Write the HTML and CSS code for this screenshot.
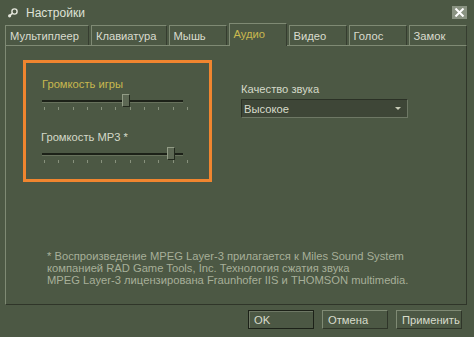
FILE: index.html
```html
<!DOCTYPE html>
<html lang="ru">
<head>
<meta charset="utf-8">
<title>Настройки</title>
<link rel="stylesheet" href="styles.css">
</head>
<body>
<div class="window">
  <header class="titlebar">
    <svg class="logo" width="12" height="12" viewBox="0 0 12 12">
      <circle cx="7.5" cy="4.5" r="2.6" fill="none" stroke="#e4e6dc" stroke-width="1.4"/>
      <line x1="5.6" y1="6.2" x2="2.6" y2="8.6" stroke="#e4e6dc" stroke-width="1.6"/>
      <circle cx="2.6" cy="8.8" r="1.6" fill="#e4e6dc"/>
    </svg>
    <span class="title">Настройки</span>
    <button class="close" type="button" aria-label="Закрыть">
      <svg width="11" height="9" viewBox="0 0 11 9"><path d="M1.5 0.5 L9.5 8.5 M9.5 0.5 L1.5 8.5" stroke="#ffffff" stroke-width="2"/></svg>
    </button>
  </header>

  <nav class="tabs">
    <span class="tab">Мультиплеер</span>
    <span class="tab">Клавиатура</span>
    <span class="tab">Мышь</span>
    <span class="tab tab-active">Аудио</span>
    <span class="tab">Видео</span>
    <span class="tab">Голос</span>
    <span class="tab">Замок</span>
  </nav>

  <section class="panel">
    <div class="panel-top">
      <div class="group">
        <div class="field">
          <span class="lbl lbl-hi">Громкость игры</span>
          <div class="slider">
            <div class="track"></div>
            <div class="thumb" style="left:80px"></div>
            <div class="ticks"><i></i><i></i><i></i><i></i><i></i><i></i><i></i><i></i><i></i><i></i><i></i></div>
          </div>
        </div>
        <div class="field field-second">
          <span class="lbl">Громкость MP3 *</span>
          <div class="slider">
            <div class="track"></div>
            <div class="thumb" style="left:125px"></div>
            <div class="ticks"><i></i><i></i><i></i><i></i><i></i><i></i><i></i><i></i><i></i><i></i><i></i></div>
          </div>
        </div>
      </div>
      <div class="quality">
        <span class="lbl">Качество звука</span>
        <div class="select">
          <span>Высокое</span>
          <span class="arrow"></span>
        </div>
      </div>
    </div>
    <p class="note">* Воспроизведение MPEG Layer-3 прилагается к Miles Sound System<br>компанией RAD Game Tools, Inc. Технология сжатия звука<br>MPEG Layer-3 лицензирована Fraunhofer IIS и THOMSON multimedia.</p>
  </section>

  <footer class="buttons">
    <button class="btn btn-default" type="button">OK</button>
    <button class="btn" type="button">Отмена</button>
    <button class="btn" type="button">Применить</button>
  </footer>
</div>
</body>
</html>
```

FILE: styles.css
```css
* { box-sizing: border-box; }
html, body {
  margin: 0;
  padding: 0;
  background: #4c5844;
}
body {
  font-family: "Liberation Sans", Arial, sans-serif;
  font-size: 11.2px;
  color: #d8dccc;
}
.window {
  width: 474px;
  height: 337px;
  display: flex;
  flex-direction: column;
  padding: 0 7px 0 5px;
  background: #4c5844;
}
.titlebar {
  height: 25px;
  display: flex;
  align-items: center;
  padding: 0 0 0 2px;
}
.logo { display: block; margin-right: 7px; margin-top: 1px; }
.title { font-size: 12px; color: #dfe2d6; margin-top: 1px; }
.close {
  margin-left: auto;
  margin-top: -1px;
  width: 15px;
  height: 13px;
  padding: 0;
  border: none;
  background: #8a9382;
  display: flex;
  align-items: center;
  justify-content: center;
}
.close svg { display: block; }

.tabs {
  display: flex;
  align-items: flex-end;
  gap: 2px;
  height: 20px;
}
.tab {
  height: 20px;
  min-width: 58px;
  padding: 0 9px 0 4px;
  display: flex;
  align-items: center;
  border-top: 1px solid #7f8a74;
  border-left: 1px solid #7f8a74;
  border-right: 1px solid #363d30;
  color: #dadccf;
  white-space: nowrap;
}
.tab-active {
  height: 23px;
  margin-bottom: -1px;
  padding-bottom: 3px;
  background: #4c5844;
  color: #c9b84f;
  position: relative;
  z-index: 1;
}

.panel {
  height: 260px;
  border-top: 1px solid #7f8a74;
  border-left: 1px solid #7f8a74;
  border-right: 1px solid #2f3529;
  border-bottom: 1px solid #2f3529;
  display: flex;
  flex-direction: column;
}
.panel-top {
  display: flex;
  align-items: flex-start;
  padding: 14px 0 0 17px;
  gap: 29px;
}
.group {
  width: 189px;
  height: 122px;
  border: 3px solid #f0852f;
  padding: 14px 0 0 16px;
  display: flex;
  flex-direction: column;
}
.field { display: flex; flex-direction: column; }
.field-second { margin-top: 19px; }
.lbl {
  line-height: 14px;
  color: #d4d8c8;
}
.field-second .lbl { margin-left: -1px; }
.lbl-hi { color: #c9b84f; }
.slider {
  position: relative;
  width: 146px;
  height: 17px;
  margin-top: 3px;
}
.track {
  position: absolute;
  left: 0;
  top: 6px;
  width: 141px;
  height: 3px;
  background: #1c2118;
  border-bottom: 1px solid #67715c;
}
.thumb {
  position: absolute;
  top: 0;
  width: 8px;
  height: 13px;
  background: #5d6854;
  border-top: 1px solid #929c86;
  border-left: 1px solid #929c86;
  border-right: 1px solid #232a1e;
  border-bottom: 1px solid #232a1e;
}
.ticks {
  position: absolute;
  left: 2px;
  right: 0;
  top: 13px;
  display: flex;
  justify-content: space-between;
}
.ticks i {
  display: block;
  width: 1px;
  height: 3px;
  background: #87917c;
}

.quality {
  display: flex;
  flex-direction: column;
  padding-top: 22px;
}
.select {
  margin-top: 3px;
  width: 167px;
  height: 19px;
  background: #3e4637;
  border-top: 1px solid #2b3126;
  border-left: 1px solid #2b3126;
  border-right: 1px solid #6e7865;
  border-bottom: 1px solid #6e7865;
  display: flex;
  align-items: center;
  padding: 0 6px 0 2px;
  color: #d8dccc;
}
.arrow {
  margin-left: auto;
  width: 0;
  height: 0;
  border-left: 3px solid transparent;
  border-right: 3px solid transparent;
  border-top: 3px solid #c8ccb8;
}

.note {
  margin: auto 0 18px 0;
  padding-left: 41px;
  line-height: 12px;
  color: #a7af99;
}

.buttons {
  display: flex;
  justify-content: flex-end;
  gap: 8px;
  padding: 5px 5px 0 0;
}
.btn {
  width: 66px;
  height: 19px;
  padding: 0 0 0 5px;
  font: inherit;
  text-align: left;
  color: #d8dccc;
  background: #4c5844;
  border-top: 1px solid #7f8a74;
  border-left: 1px solid #7f8a74;
  border-right: 1px solid #2f3529;
  border-bottom: 1px solid #2f3529;
}
.btn-default {
  border: 1px solid #1c2118;
  box-shadow: inset 1px 1px 0 #6e7865;
}
```
